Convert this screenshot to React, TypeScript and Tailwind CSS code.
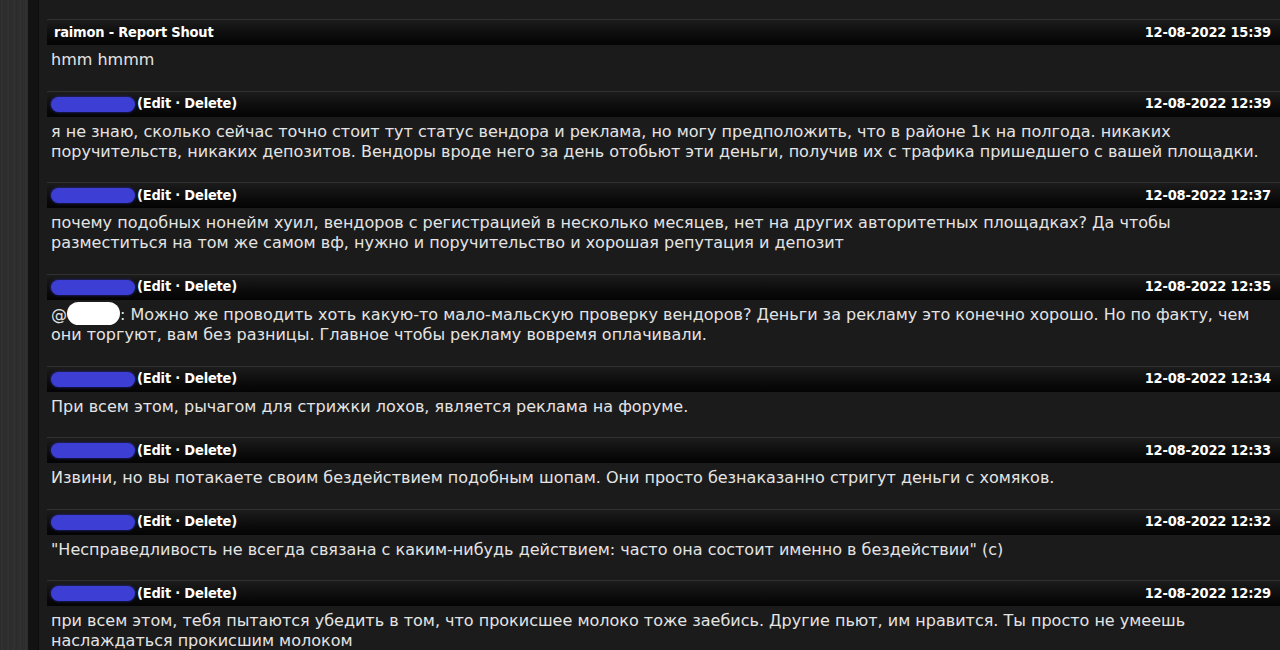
type Post = {
    user?: string;
    date: string;
    lines: string[];
    mention?: boolean;
};

const posts: Post[] = [
    { user: "raimon - Report Shout", date: "12-08-2022 15:39", lines: ["hmm hmmm"] },
    {
        date: "12-08-2022 12:39",
        lines: [
            "я не знаю, сколько сейчас точно стоит тут статус вендора и реклама, но могу предположить, что в районе 1к на полгода. никаких",
            "поручительств, никаких депозитов. Вендоры вроде него за день отобьют эти деньги, получив их с трафика пришедшего с вашей площадки.",
        ],
    },
    {
        date: "12-08-2022 12:37",
        lines: [
            "почему подобных нонейм хуил, вендоров с регистрацией в несколько месяцев, нет на других авторитетных площадках? Да чтобы",
            "разместиться на том же самом вф, нужно и поручительство и хорошая репутация и депозит",
        ],
    },
    {
        date: "12-08-2022 12:35",
        mention: true,
        lines: [
            ": Можно же проводить хоть какую-то мало-мальскую проверку вендоров? Деньги за рекламу это конечно хорошо. Но по факту, чем",
            "они торгуют, вам без разницы. Главное чтобы рекламу вовремя оплачивали.",
        ],
    },
    { date: "12-08-2022 12:34", lines: ["При всем этом, рычагом для стрижки лохов, является реклама на форуме."] },
    {
        date: "12-08-2022 12:33",
        lines: ["Извини, но вы потакаете своим бездействием подобным шопам. Они просто безнаказанно стригут деньги с хомяков."],
    },
    {
        date: "12-08-2022 12:32",
        lines: ["\"Несправедливость не всегда связана с каким-нибудь действием: часто она состоит именно в бездействии\" (c)"],
    },
    {
        date: "12-08-2022 12:29",
        lines: [
            "при всем этом, тебя пытаются убедить в том, что прокисшее молоко тоже заебись. Другие пьют, им нравится. Ты просто не умеешь",
            "наслаждаться прокисшим молоком",
        ],
    },
];

const ShoutRow = ({ post }: { post: Post }) => {
    return (
        <div className="flex flex-col">
            <div className="h-[26px] flex items-center justify-between pl-[4px] pr-[9px] border-t-[1px] border-[#303030] bg-gradient-to-b from-[#1c1c1c] to-[#040404] text-white font-bold text-[14.5px] [font-family:'DejaVu_Sans_Condensed','DejaVu_Sans',Tahoma,sans-serif] tracking-[-0.2px]">
                {post.user ? (
                    <span className="pl-[3px]">{post.user}</span>
                ) : (
                    <span className="flex items-center">
                        <span className="inline-block w-[84px] h-[15px] rounded-full bg-[#3d3fd4] shadow-[0_0_3px_#2b2db0]" />
                        <span className="ml-[2px]">(Edit · Delete)</span>
                    </span>
                )}
                <span>{post.date}</span>
            </div>
            <div className="pt-[5px] pb-[20.5px] pl-[4px] text-[#e4e4e4] text-[16px] leading-[20px] [font-family:'DejaVu_Sans',Verdana,sans-serif]">
                {post.lines.map((line, i) => (
                    <div key={i} className="whitespace-nowrap">
                        {post.mention && i === 0 ? (
                            <>
                                @
                                <span className="inline-block align-middle w-[53px] h-[23px] -mt-[3px] rounded-full bg-white" />
                            </>
                        ) : null}
                        {line}
                    </div>
                ))}
            </div>
        </div>
    );
};

export default function App() {
    return (
        <div className="w-[1280px] h-[650px] overflow-hidden flex bg-[#2c2c2c]">
            <div className="w-[28px] shrink-0 bg-[repeating-linear-gradient(90deg,#2a2a2a_0px,#333333_2px,#2b2b2b_4px,#303030_6px)]" />
            <div className="w-[11px] shrink-0 bg-[#121212] border-r-[1px] border-[#0c0c0c]" />
            <div className="flex-1 bg-[#1b1b1b] pl-[8px] pt-[19px]">
                {posts.map((p, i) => (
                    <ShoutRow key={i} post={p} />
                ))}
            </div>
        </div>
    );
}
